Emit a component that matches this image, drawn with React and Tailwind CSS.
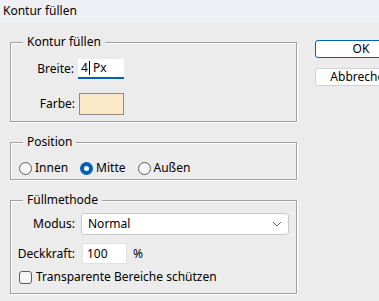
function Group({ label, className = '', children }) {
  return (
    <div
      className={`relative border border-[#a0a0a0] shadow-[1px_1px_0_#fff,inset_1px_1px_0_#fff] ${className}`}
    >
      <span className="absolute -top-[9px] left-[12px] bg-[#ececec] px-[4px] leading-[16px]">
        {label}
      </span>
      {children}
    </div>
  );
}

function Radio({ checked, label }) {
  return (
    <label className="flex items-center gap-[3px]">
      {checked ? (
        <span className="flex h-[13px] w-[13px] items-center justify-center rounded-full bg-[#005fb8]">
          <span className="h-[5px] w-[5px] rounded-full bg-white" />
        </span>
      ) : (
        <span className="h-[13px] w-[13px] rounded-full border border-[#5d5d5d] bg-[#f6f6f6]" />
      )}
      <span>{label}</span>
    </label>
  );
}

export default function App() {
  return (
    <div
      className="h-[301px] w-[379px] overflow-hidden bg-[#ececec] text-[12px] leading-[16px] text-black"
      style={{ fontFamily: '"Noto Sans", sans-serif' }}
    >
      <div className="flex h-[22px] items-center bg-[#eff0f5] pl-[3px]">Kontur füllen</div>

      <div className="flex pl-[10px] pt-[20px]">
        <div className="flex w-[287px] shrink-0 flex-col gap-[20px]">
          <Group label="Kontur füllen" className="h-[80px]">
            <div className="flex items-center pt-[16px]">
              <span className="w-[67px] pr-[4px] text-right">Breite:</span>
              <div className="flex h-[20px] w-[46px] items-center border-b-2 border-[#005fb8] bg-white pl-[3px]">
                <span>4</span>
                <span className="mx-[1px] h-[14px] w-px bg-black" />
                <span className="pl-[2px]">Px</span>
              </div>
            </div>
            <div className="mt-[14px] flex items-center">
              <span className="w-[67px] pr-[3px] text-right">Farbe:</span>
              <div className="ml-[1px] h-[22px] w-[45px] border border-[#8c8c8c] bg-[#fbe8c8]" />
            </div>
          </Group>

          <Group label="Position" className="h-[38px]">
            <div className="flex items-center gap-[12px] pl-[8px] pt-[17px]">
              <Radio label="Innen" />
              <Radio checked label="Mitte" />
              <Radio label="Außen" />
            </div>
          </Group>

          <Group label="Füllmethode" className="h-[94px]">
            <div className="flex items-center pt-[12px]">
              <span className="w-[67px] pr-[3px] text-right">Modus:</span>
              <div className="ml-[3px] flex h-[22px] w-[208px] items-center justify-between rounded-[3px] border border-[#c8c8c8] bg-white pl-[6px] pr-[6px]">
                <span>Normal</span>
                <svg width="10" height="6" viewBox="0 0 10 6" fill="none">
                  <path d="M1 1l4 4 4-4" stroke="#606060" strokeWidth="1" />
                </svg>
              </div>
            </div>
            <div className="mt-[8px] flex items-center">
              <span className="w-[67px] pr-[3px] text-right">Deckkraft:</span>
              <div className="ml-[4px] flex h-[21px] w-[45px] items-center border border-[#e2e2e2] bg-white pl-[4px]">
                100
              </div>
              <span className="ml-[6px]">%</span>
            </div>
            <label className="mt-[5px] flex items-center gap-[4px] pl-[8px]">
              <span className="h-[13px] w-[13px] rounded-[3px] border border-[#5d5d5d] bg-[#f6f6f6]" />
              <span>Transparente Bereiche schützen</span>
            </label>
          </Group>
        </div>

        <div className="ml-[18px] flex shrink-0 flex-col gap-[10px]">
          <button className="-mt-[2px] h-[18px] w-[92px] rounded-[3px] border border-[#005fb8] bg-white leading-[14px] text-black">
            OK
          </button>
          <button className="h-[18px] w-[92px] rounded-[3px] border border-[#d0d0d0] bg-white leading-[14px] text-black">
            Abbrechen
          </button>
        </div>
      </div>
    </div>
  );
}
